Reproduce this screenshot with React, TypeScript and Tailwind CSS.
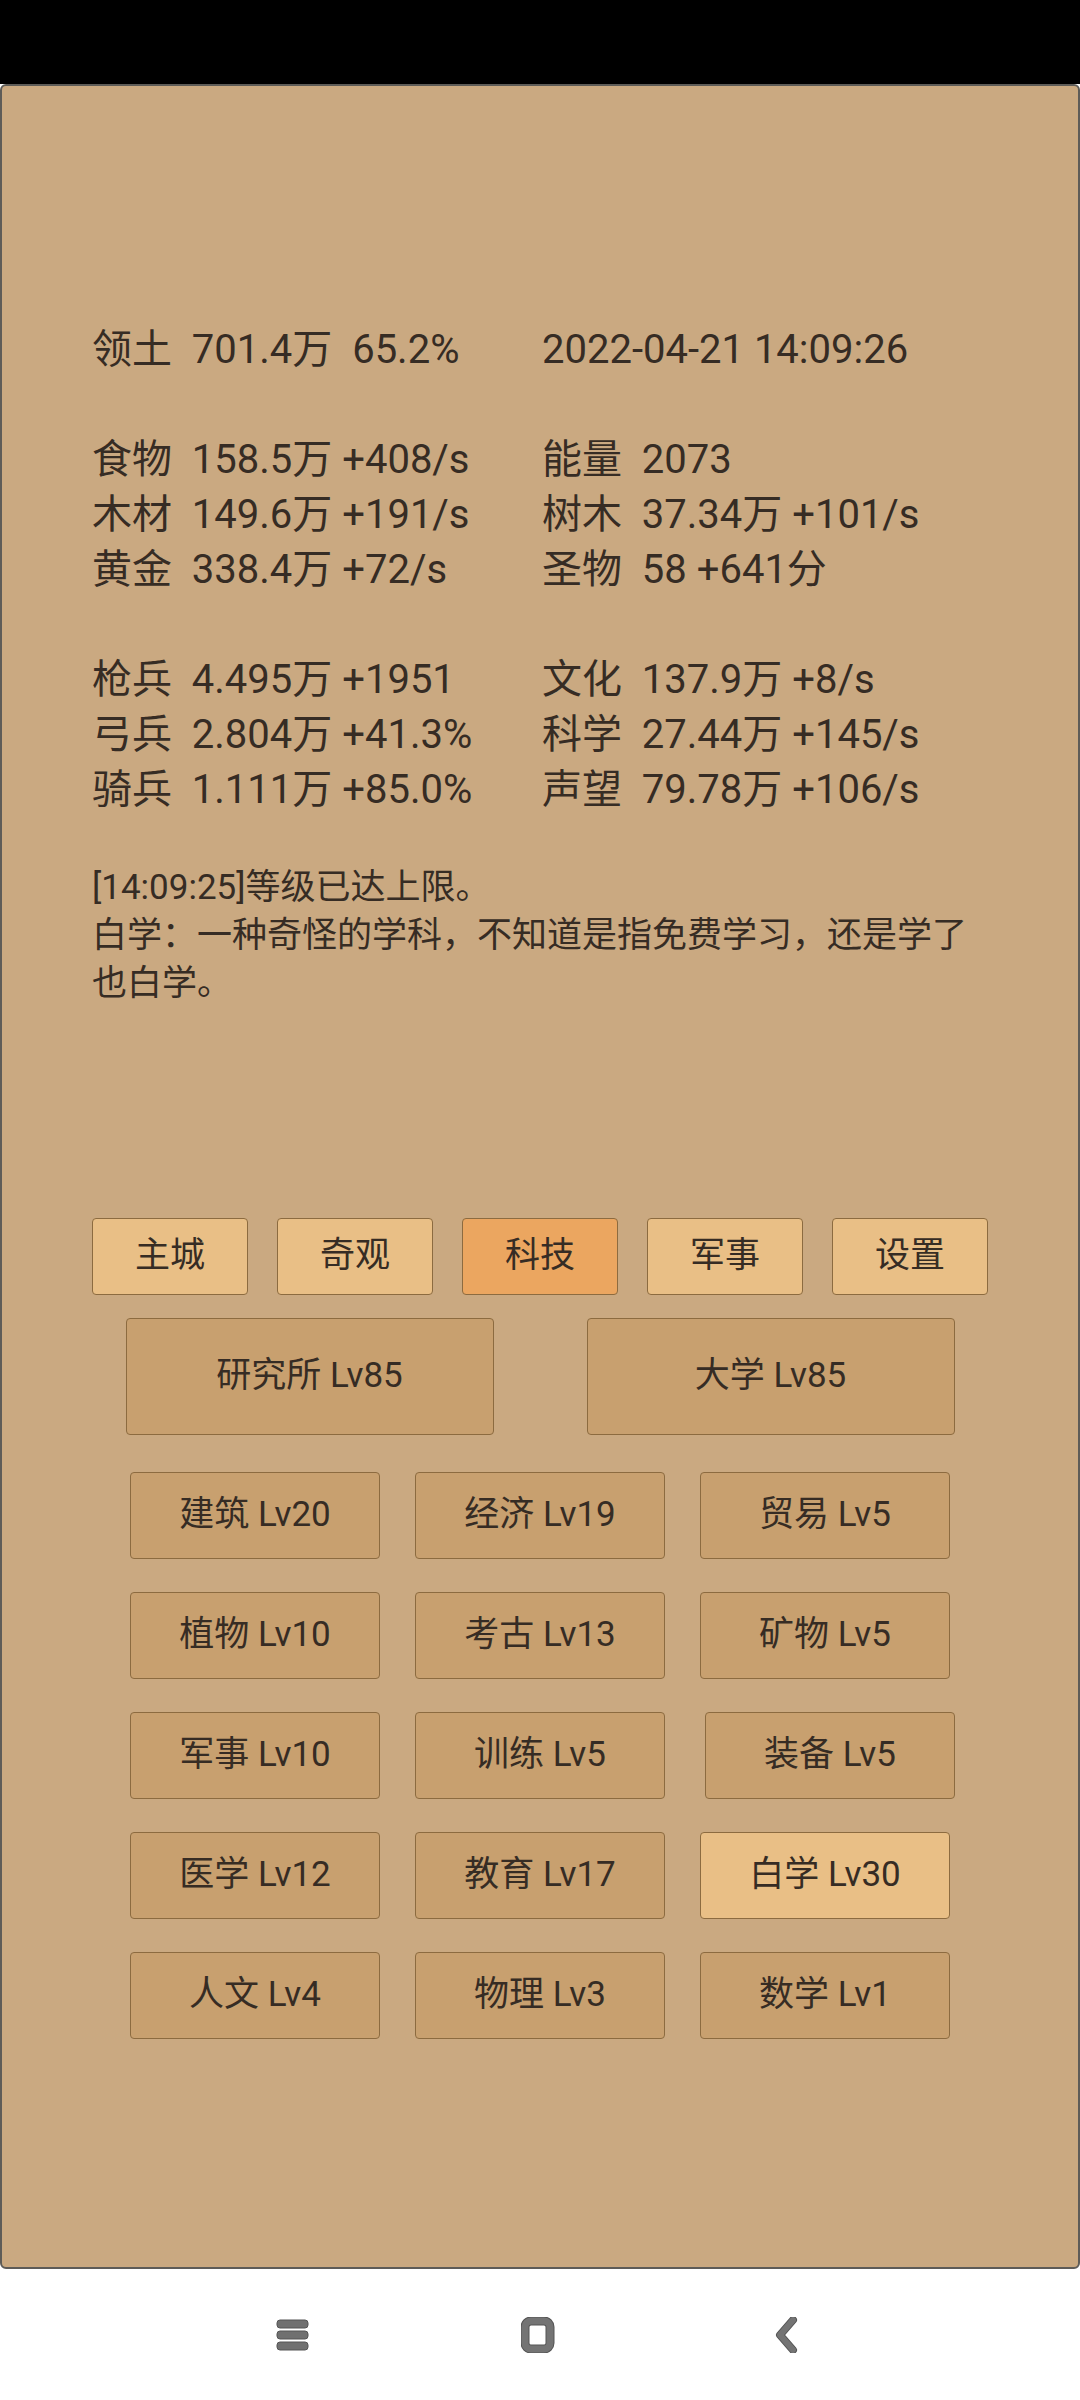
import React from "react";

const FONT = { fontFamily: 'Roboto, "Noto Sans CJK SC", sans-serif' };

const statRows: ([string, string] | null)[] = [
  ["领土  701.4万  65.2%", "2022-04-21 14:09:26"],
  null,
  ["食物  158.5万 +408/s", "能量  2073"],
  ["木材  149.6万 +191/s", "树木  37.34万 +101/s"],
  ["黄金  338.4万 +72/s", "圣物  58 +641分"],
  null,
  ["枪兵  4.495万 +1951", "文化  137.9万 +8/s"],
  ["弓兵  2.804万 +41.3%", "科学  27.44万 +145/s"],
  ["骑兵  1.111万 +85.0%", "声望  79.78万 +106/s"],
];

const tabs = [
  { t: "主城", active: false },
  { t: "奇观", active: false },
  { t: "科技", active: true },
  { t: "军事", active: false },
  { t: "设置", active: false },
];

const grid: { t: string; hi?: boolean; shift?: boolean }[][] = [
  [{ t: "建筑 Lv20" }, { t: "经济 Lv19" }, { t: "贸易 Lv5" }],
  [{ t: "植物 Lv10" }, { t: "考古 Lv13" }, { t: "矿物 Lv5" }],
  [{ t: "军事 Lv10" }, { t: "训练 Lv5" }, { t: "装备 Lv5", shift: true }],
  [{ t: "医学 Lv12" }, { t: "教育 Lv17" }, { t: "白学 Lv30", hi: true }],
  [{ t: "人文 Lv4" }, { t: "物理 Lv3" }, { t: "数学 Lv1" }],
];

export default function App() {
  return (
    <div className="w-[1080px] h-[2400px] flex flex-col bg-white text-[#362c24]" style={FONT}>
      <div className="h-[84px] bg-black shrink-0" />
      <div className="h-[2185px] shrink-0 bg-[#caa981] border-2 border-[#5e5c58] rounded-[6px] flex flex-col pt-[236px] px-[88px]">
        {/* stats */}
        <div className="flex flex-col text-[40px]">
          {statRows.map((r, i) =>
            r ? (
              <div key={i} className="h-[55px] flex items-center whitespace-pre leading-none">
                <span className="w-[450px] pl-[2px]">{r[0]}</span>
                <span className="pl-[2px]">{r[1]}</span>
              </div>
            ) : (
              <div key={i} className="h-[55px]" />
            )
          )}
        </div>
        {/* message */}
        <div className="mt-[47px] w-[900px] text-[35px] leading-[48px] pl-[2px]">
          <div>[14:09:25]等级已达上限。</div>
          <div>白学：一种奇怪的学科，不知道是指免费学习，还是学了也白学。</div>
        </div>
        {/* tabs */}
        <div className="mt-[210px] flex gap-[29px] pl-[2px]">
          {tabs.map((b) => (
            <div
              key={b.t}
              className={`w-[156px] h-[77px] flex items-center justify-center text-[35px] border border-[#8c6b40] rounded-[4px] ${
                b.active ? "bg-[#eba660]" : "bg-[#e9bf86]"
              }`}
            >
              {b.t}
            </div>
          ))}
        </div>
        {/* big buttons */}
        <div className="mt-[23px] flex justify-center gap-[93px]">
          {["研究所 Lv85", "大学 Lv85"].map((t) => (
            <div
              key={t}
              className="w-[368px] h-[117px] flex items-center justify-center text-[35px] bg-[#c8a06f] border border-[#8c6b40] rounded-[4px]"
            >
              {t}
            </div>
          ))}
        </div>
        {/* grid */}
        <div className="mt-[37px] flex flex-col gap-[33px] items-center">
          {grid.map((row, i) => (
            <div key={i} className="flex gap-[35px]">
              {row.map((b) => (
                <div
                  key={b.t}
                  className={`w-[250px] h-[87px] flex items-center justify-center text-[35px] border border-[#8c6b40] rounded-[4px] ${
                    b.hi ? "bg-[#e9bf86]" : "bg-[#c8a06f]"
                  } ${b.shift ? "ml-[5px] -mr-[5px]" : ""}`}
                >
                  {b.t}
                </div>
              ))}
            </div>
          ))}
        </div>
      </div>
      {/* nav bar */}
      <div className="flex-1 bg-white relative">
        <div className="absolute left-[276px] top-[50px]">
          <svg width="34" height="32" viewBox="0 0 34 32">
            <rect x="1" y="1" width="31" height="8" rx="3" fill="#707070" stroke="#555" strokeWidth="1" />
            <rect x="1" y="12" width="31" height="8" rx="3" fill="#707070" stroke="#555" strokeWidth="1" />
            <rect x="1" y="23" width="31" height="8" rx="3" fill="#707070" stroke="#555" strokeWidth="1" />
          </svg>
        </div>
        <div className="absolute left-[521px] top-[48px]">
          <svg width="34" height="36" viewBox="0 0 34 36">
            <rect x="4" y="4" width="25" height="28" rx="6" fill="none" stroke="#555" strokeWidth="9" />
            <rect x="4" y="4" width="25" height="28" rx="6" fill="none" stroke="#747474" strokeWidth="7" />
          </svg>
        </div>
        <div className="absolute left-[772px] top-[48px]">
          <svg width="28" height="36" viewBox="0 0 28 36">
            <path d="M21 3 L8 18 L21 33" fill="none" stroke="#555" strokeWidth="8" strokeLinecap="round" strokeLinejoin="round" />
            <path d="M21 3 L8 18 L21 33" fill="none" stroke="#747474" strokeWidth="6" strokeLinecap="round" strokeLinejoin="round" />
          </svg>
        </div>
      </div>
    </div>
  );
}
